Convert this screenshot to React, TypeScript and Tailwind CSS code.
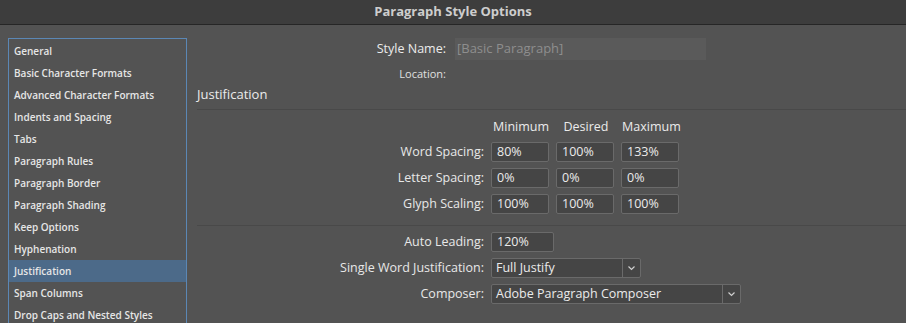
import React from 'react';

const sections = [
  'General',
  'Basic Character Formats',
  'Advanced Character Formats',
  'Indents and Spacing',
  'Tabs',
  'Paragraph Rules',
  'Paragraph Border',
  'Paragraph Shading',
  'Keep Options',
  'Hyphenation',
  'Justification',
  'Span Columns',
  'Drop Caps and Nested Styles',
];

const spacingRows = [
  { label: 'Word Spacing:', values: ['80%', '100%', '133%'] },
  { label: 'Letter Spacing:', values: ['0%', '0%', '0%'] },
  { label: 'Glyph Scaling:', values: ['100%', '100%', '100%'] },
];

const Chevron = () => (
  <svg width="9" height="6" viewBox="0 0 9 6" fill="none">
    <path d="M1.5 1.5 L4.5 4.5 L7.5 1.5" stroke="#cfcfcf" strokeWidth="1.2" />
  </svg>
);

const Field = ({ value, width }: { value: string; width: string }) => (
  <div className={`${width} h-[20px] flex items-center px-[5px] bg-[#454545] border border-[#6a6a6a] rounded-[2px] text-[12.5px] text-[#ebebeb]`}>
    {value}
  </div>
);

const Select = ({ value, width }: { value: string; width: string }) => (
  <div className={`${width} h-[20px] flex items-stretch bg-[#454545] border border-[#6a6a6a] rounded-[2px] text-[12.5px] text-[#ebebeb]`}>
    <div className="flex-1 flex items-center px-[4px]">{value}</div>
    <div className="w-[18px] flex items-center justify-center border-l border-[#6a6a6a]">
      <Chevron />
    </div>
  </div>
);

const Label = ({ children }: { children: React.ReactNode }) => (
  <div className="w-[298px] pr-[1px] text-right text-[12.5px] text-[#e8e8e8]">{children}</div>
);

export default function App() {
  return (
    <div
      className="w-[906px] h-[323px] overflow-hidden bg-[#535353] flex flex-col"
      style={{ fontFamily: '"Open Sans", "DejaVu Sans", sans-serif' }}
    >
      {/* Title bar */}
      <div className="h-[25px] shrink-0 bg-[#3d3d3d] border-b border-[#262626] flex items-center justify-center">
        <span className="text-[13px] font-bold text-[#cdcdcd]">Paragraph Style Options</span>
      </div>

      <div className="flex flex-1">
        {/* Section list */}
        <div className="ml-[8px] mt-[13px] w-[179px] shrink-0 border border-b-0 border-[#5b87b5] pt-[1px]">
          {sections.map((s) => (
            <div
              key={s}
              className={`h-[22px] flex items-center pl-[5px] text-[10px] font-semibold text-[#e6e6e6] ${
                s === 'Justification' ? 'bg-[#4c6a89]' : ''
              }`}
            >
              {s}
            </div>
          ))}
        </div>

        {/* Options panel */}
        <div className="flex-1 flex flex-col">
          <div className="mt-[13px] h-[22px] flex items-center">
            <div className="w-[259px] text-right text-[12.5px] text-[#ececec]">Style Name:</div>
            <div className="ml-[9px] w-[251px] h-[22px] flex items-center px-[2px] bg-[#5a5a5a] text-[13px] text-[#8e8e8e]">
              [Basic Paragraph]
            </div>
          </div>

          <div className="mt-[4px] h-[20px] flex items-center">
            <div className="w-[259px] text-right text-[11px] text-[#e0e0e0]">Location:</div>
          </div>

          <div className="mt-[2px] h-[18px] flex items-center pl-[10px] text-[13px] text-[#ebebeb]">
            Justification
          </div>

          <div className="mt-[5px] ml-[10px] h-px bg-[#494949]" />

          <div className="mt-[8px] h-[18px] flex items-center">
            <div className="w-[305px]" />
            <div className="flex gap-[7px] text-[12.5px] text-[#ebebeb]">
              <div className="w-[58px] text-center">Minimum</div>
              <div className="w-[58px] text-center">Desired</div>
              <div className="w-[58px] text-center">Maximum</div>
            </div>
          </div>

          <div className="mt-[6px] flex flex-col gap-[6px]">
            {spacingRows.map((row) => (
              <div key={row.label} className="flex items-center">
                <Label>{row.label}</Label>
                <div className="ml-[6px] flex gap-[7px]">
                  {row.values.map((v, i) => (
                    <Field key={i} value={v} width="w-[58px]" />
                  ))}
                </div>
              </div>
            ))}
          </div>

          <div className="mt-[11px] ml-[10px] h-px bg-[#494949]" />

          <div className="mt-[6px] flex items-center">
            <Label>Auto Leading:</Label>
            <div className="ml-[6px]">
              <Field value="120%" width="w-[63px]" />
            </div>
          </div>

          <div className="mt-[6px] flex items-center">
            <Label>Single Word Justification:</Label>
            <div className="ml-[6px]">
              <Select value="Full Justify" width="w-[150px]" />
            </div>
          </div>

          <div className="mt-[6px] flex items-center">
            <Label>Composer:</Label>
            <div className="ml-[6px]">
              <Select value="Adobe Paragraph Composer" width="w-[250px]" />
            </div>
          </div>
        </div>
      </div>
    </div>
  );
}
